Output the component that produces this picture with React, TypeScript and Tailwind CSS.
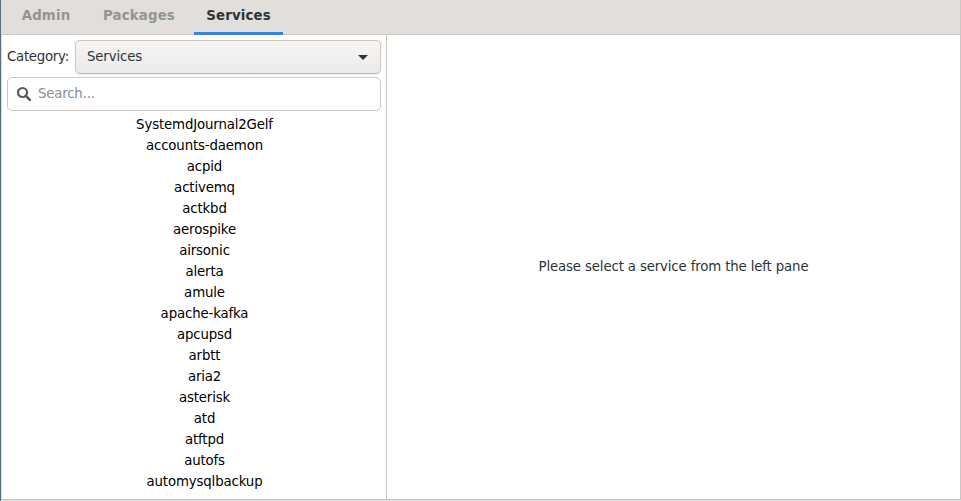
const services = ["SystemdJournal2Gelf","accounts-daemon","acpid","activemq","actkbd","aerospike","airsonic","alerta","amule","apache-kafka","apcupsd","arbtt","aria2","asterisk","atd","atftpd","autofs","automysqlbackup"];

export default function App() {
  return (
    <div className="flex h-[501px] w-[961px] flex-col overflow-hidden border-l border-[#5c707b] bg-white font-['DejaVu_Sans',sans-serif] text-[13.33px] tracking-[-0.15px] text-[#2e3436]">
      <nav className="flex h-[35px] shrink-0 border-r border-b border-[#cdc7c2] bg-[#e1dedb] pl-[9px] font-bold tracking-[0.15px] text-[#929595]">
        <div className="h-[34px] w-[72px] pt-[6px] text-center leading-5">Admin</div>
        <div className="ml-[9px] h-[34px] w-[96px] pt-[6px] text-center leading-5">Packages</div>
        <div className="ml-[7px] h-[35px] w-[89px] border-b-[3px] border-[#3584e4] pt-[6px] text-center leading-5 text-[#2e3436]">Services</div>
      </nav>
      <main className="flex h-[464px] shrink-0 border-l border-[#dcd8d4]">
        <aside className="w-[385px] shrink-0 border-r border-[#cdc7c2] pt-[5px] pl-[5px]">
          <div className="flex h-[34px] w-[374px] items-center">
            <span className="w-[68px] whitespace-nowrap tracking-[-0.28px]">Category:</span>
            <button className="flex h-[34px] w-[306px] items-center justify-between rounded-[5px] border border-[#cdc7c2] border-b-[#bfb8b1] bg-linear-to-b from-[#f6f5f4] to-[#edebe9] pr-[12px] pl-[11px] tracking-[-0.15px] shadow-[0_1px_2px_rgba(0,0,0,0.07)]">
              <span>Services</span>
              <svg width="10" height="5" viewBox="0 0 10 5"><path d="M0 0H10L5 5Z" fill="#2e3436" /></svg>
            </button>
          </div>
          <div className="mt-[3px] flex h-[34px] w-[374px] items-center rounded-[5px] border border-[#cdc7c2] pl-[8px] text-[#8b8e8f]">
            <svg width="16" height="16" viewBox="0 0 16 16" fill="none" stroke="#565b5d" strokeWidth="2.2"><circle cx="6.5" cy="6.5" r="4.5" /><path d="M9.8 9.8L13.8 13.8" strokeWidth="2.6" strokeLinecap="round" /></svg>
            <span className="ml-[6px] tracking-[-0.2px]">Search...</span>
          </div>
          <ul className="mt-[3px] ml-[12px] w-[371px] text-center text-black">
            {services.map((s) => <li key={s} className="h-[21px] leading-[21px]">{s}</li>)}
          </ul>
        </aside>
        <section className="flex flex-1 items-center justify-center border-r border-[#cdc7c2] pb-px">Please select a service from the left pane</section>
      </main>
      <div className="h-px shrink-0 bg-[#c6c2be]" />
      <div className="h-px shrink-0 bg-[#e2e3e0]" />
    </div>
  );
}
